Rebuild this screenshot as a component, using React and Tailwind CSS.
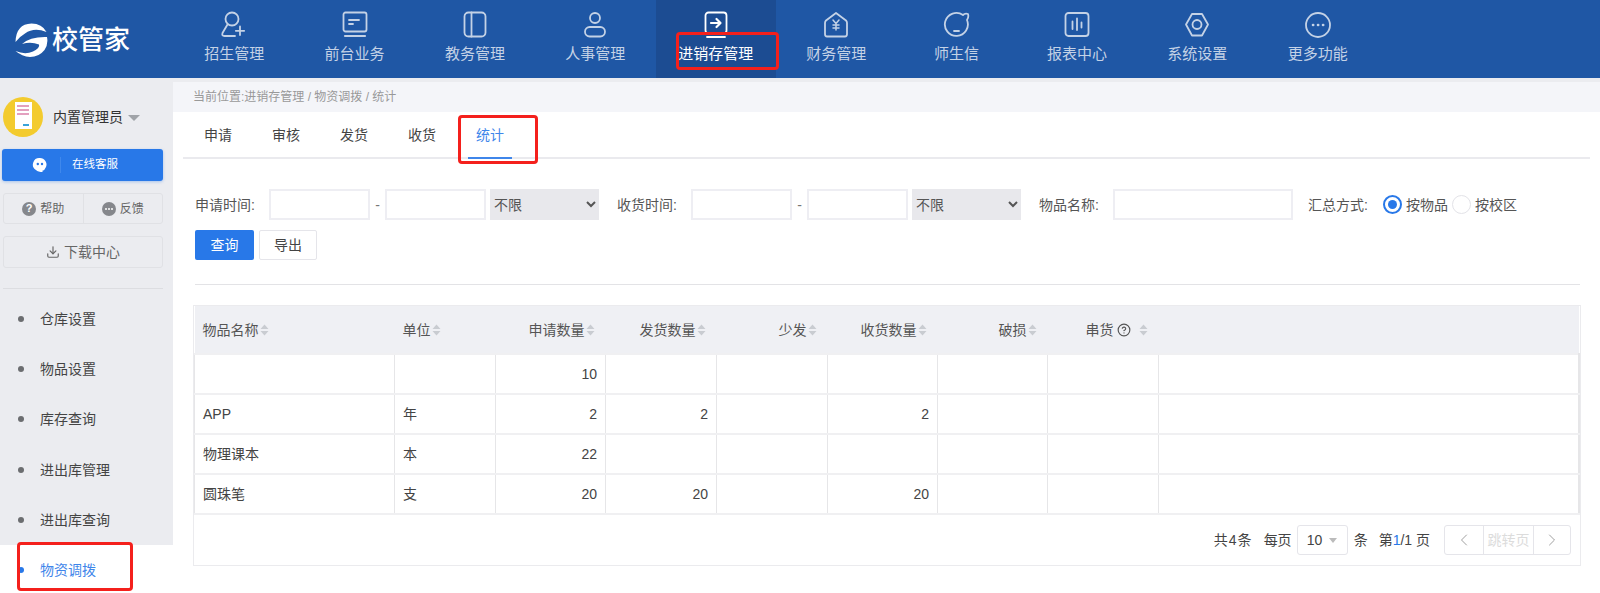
import React from 'react';
import { ChevronLeft, ChevronRight, Download, CircleHelp } from 'lucide-react';

const iconProps = {
  width: 30,
  height: 30,
  viewBox: '0 0 30 30',
  fill: 'none',
  stroke: 'currentColor',
  strokeWidth: 1.8,
  strokeLinecap: 'round',
  strokeLinejoin: 'round',
};

const navItems = [
  {
    label: '招生管理',
    icon: (
      <svg {...iconProps}>
        <circle cx="13" cy="8" r="6.5" />
        <path d="M8.5 13.5 L3.5 22 Q2.5 25 5.5 25 H16" />
        <path d="M21 15.5 V24 M16.8 19.8 H25.2" />
      </svg>
    ),
  },
  {
    label: '前台业务',
    icon: (
      <svg {...iconProps}>
        <rect x="3.5" y="1.5" width="23" height="19" rx="2" />
        <path d="M9 9 H19 M9 13 H13" />
        <path d="M5 25 H25" strokeWidth="2.2" />
      </svg>
    ),
  },
  {
    label: '教务管理',
    icon: (
      <svg {...iconProps}>
        <rect x="4.5" y="1.5" width="21" height="24" rx="4" />
        <path d="M11.5 1.5 V25.5" />
      </svg>
    ),
  },
  {
    label: '人事管理',
    icon: (
      <svg {...iconProps}>
        <circle cx="15" cy="7" r="5" />
        <rect x="5" y="16" width="20" height="9.5" rx="4.7" />
      </svg>
    ),
  },
  {
    label: '进销存管理',
    active: true,
    icon: (
      <svg {...iconProps}>
        <rect x="4.5" y="1.5" width="21" height="21" rx="3" />
        <path d="M10 12 H19 M15.5 8 L19.5 12 L15.5 16" strokeWidth="2.2" />
        <path d="M6 26 H24" />
      </svg>
    ),
  },
  {
    label: '财务管理',
    icon: (
      <svg {...iconProps}>
        <path d="M15 2 L25 9.5 Q26 10.5 26 12 V23 Q26 25.5 24 25.5 H6 Q4 25.5 4 23 V12 Q4 10.5 5 9.5 Z" />
        <path d="M12 9 L15 12.5 L18 9 M15 12.5 V19 M12 14 H18 M12 17 H18" strokeWidth="1.5" />
      </svg>
    ),
  },
  {
    label: '师生信',
    icon: (
      <svg {...iconProps}>
        <path d="M21 4 A11.5 11.5 0 1 0 25 9 Q27 6 26 3 Q23 2 21 4 Z" />
        <path d="M12 20 H17" />
      </svg>
    ),
  },
  {
    label: '报表中心',
    icon: (
      <svg {...iconProps}>
        <rect x="3.5" y="2" width="23" height="23" rx="3" />
        <path d="M10.5 10.5 V18 M15 7.5 V19 M19.5 11.5 V16.5" />
      </svg>
    ),
  },
  {
    label: '系统设置',
    icon: (
      <svg {...iconProps}>
        <path d="M10 3 H20 L26 13.5 L20 24.5 H10 L4 13.5 Z" />
        <circle cx="15" cy="13.5" r="4.5" />
      </svg>
    ),
  },
  {
    label: '更多功能',
    icon: (
      <svg {...iconProps}>
        <circle cx="15" cy="14" r="12" />
        <path d="M10 14 H10.2 M15 14 H15.2 M20 14 H20.2" strokeWidth="2.6" />
      </svg>
    ),
  },
];

const menuItems = ['仓库设置', '物品设置', '库存查询', '进出库管理', '进出库查询', '物资调拨'];
const tabs = ['申请', '审核', '发货', '收货', '统计'];

const rows = [
  ['', '', '10', '', '', '', '', ''],
  ['APP', '年', '2', '2', '', '2', '', ''],
  ['物理课本', '本', '22', '', '', '', '', ''],
  ['圆珠笔', '支', '20', '20', '', '20', '', ''],
];

const SortIcon = () => (
  <svg width="9" height="12" viewBox="0 0 9 12" className="shrink-0 ml-px">
    <path d="M4.5 0.5 L8.5 5 H0.5 Z M4.5 11.5 L0.5 7 H8.5 Z" fill="#c9ccd1" />
  </svg>
);

const RedBox = ({ className }) => (
  <div className={`absolute border-[3px] border-[#f4201c] rounded-[4px] pointer-events-none ${className}`} />
);

const Logo = () => (
  <div className="flex items-center w-[174px] pl-[15px] pt-[2px] shrink-0">
    <svg width="33" height="35" viewBox="0 0 33 35">
      <path d="M0.5 19 Q1 1 16.5 0.5 Q27 0.5 31.5 9 Q19 4 10 10.5 Q4 14 0.5 19 Z" fill="#fff" />
      <path d="M7 21 Q15 13.5 32 14 Q33.5 21 29.5 27 Q24 34 15 34 Q7 33.5 0.5 28 Q10 32 18 28.5 Q25 25 24 21.5 Q16 18.5 7 21 Z" fill="#fff" />
    </svg>
    <span className="ml-[4px] text-[26px] font-medium leading-none text-white">校管家</span>
  </div>
);

const TopNav = () => (
  <header className="h-[78px] bg-[#1f57a5] flex shrink-0">
    <Logo />
    {navItems.map((item) => (
      <div
        key={item.label}
        className={`w-[120.4px] flex flex-col items-center pt-[11px] ${
          item.active ? 'bg-[#1c4c92] text-white' : 'text-[#c4d2e6]'
        }`}
      >
        {item.icon}
        <span className="mt-[2px] text-[15px] leading-[22px] whitespace-nowrap">{item.label}</span>
      </div>
    ))}
  </header>
);

const Sidebar = () => (
  <aside className="w-[173px] shrink-0 bg-[#ebecf0] flex flex-col overflow-hidden">
    <div className="flex items-center h-[67px] shrink-0 pl-[3px] pt-[2px]">
      <div className="w-[40px] h-[40px] rounded-full bg-[#f3cb2e] flex items-center justify-center overflow-hidden">
        <div className="w-[17px] h-[27px] bg-white flex flex-col gap-[2px] pt-[3px] pl-[2px] -mt-[2px]">
          <div className="w-[12px] h-[2px] bg-[#e3a0bf]" />
          <div className="w-[12px] h-[2px] bg-[#e3a0bf]" />
          <div className="w-[12px] h-[2px] bg-[#e3a0bf]" />
          <div className="w-[6px] h-[2px] bg-[#3aa3d8] ml-[6px] mt-[7px]" />
        </div>
      </div>
      <span className="ml-[10px] text-sm text-[#333]">内置管理员</span>
      <div className="ml-[5px] mt-[2px] border-x-[6px] border-x-transparent border-t-[6px] border-t-[#a0a3a8]" />
    </div>

    <div className="mx-[2px] w-[161px] h-[32px] shrink-0 bg-[#2878e8] rounded-[3px] flex items-center text-white shadow-[0_1px_3px_rgba(40,120,232,0.35)]">
      <svg width="16" height="16" viewBox="0 0 16 16" className="ml-[30px]">
        <path d="M8 1 A6.5 6.5 0 0 1 14 10 Q13 13 10 14 L11 15 Q6 15 4 13 A6.5 6.5 0 0 1 8 1 Z" fill="#fff" />
        <circle cx="5.8" cy="7" r="1.2" fill="#2878e8" />
        <circle cx="10" cy="7" r="1.2" fill="#2878e8" />
      </svg>
      <div className="ml-[12px] w-px h-[16px] bg-[#3f88ec]" />
      <span className="ml-[11px] text-[11.5px]">在线客服</span>
    </div>

    <div className="mt-[12px] mx-[3px] w-[160px] h-[31px] shrink-0 border border-[#e0e1e5] rounded-[3px] flex text-xs text-[#666]">
      <div className="flex-1 flex items-center justify-center gap-[4px] border-r border-[#e0e1e5]">
        <span className="w-[14px] h-[14px] rounded-full bg-[#85878c] text-white text-[11px] font-bold flex items-center justify-center">?</span>
        帮助
      </div>
      <div className="flex-1 flex items-center justify-center gap-[4px]">
        <span className="w-[14px] h-[14px] rounded-full bg-[#85878c] flex items-center justify-center gap-px">
          <i className="w-[2px] h-[2px] bg-white rounded-full" />
          <i className="w-[2px] h-[2px] bg-white rounded-full" />
          <i className="w-[2px] h-[2px] bg-white rounded-full" />
        </span>
        反馈
      </div>
    </div>

    <div className="mt-[12px] mx-[3px] w-[160px] h-[32px] shrink-0 border border-[#e0e1e5] rounded-[3px] flex items-center justify-center gap-[4px] text-sm text-[#666]">
      <Download size={14} />
      下载中心
    </div>

    <div className="mt-[20px] mx-[3px] w-[160px] h-px shrink-0 bg-[#dcdde1]" />

    <ul className="mt-[5px] flex flex-col shrink-0">
      {menuItems.map((name, i) => {
        const active = i === menuItems.length - 1;
        return (
          <li
            key={name}
            className={`h-[50.2px] shrink-0 flex items-center pl-[18px] text-sm ${
              active ? 'bg-white text-[#3f86ea]' : 'text-[#444]'
            }`}
          >
            <span className={`w-[6px] h-[6px] rounded-full ${active ? 'bg-[#2878e8]' : 'bg-[#6b6d70]'}`} />
            <span className="ml-[16px]">{name}</span>
          </li>
        );
      })}
    </ul>
  </aside>
);

const DateRange = ({ label, className }) => (
  <div className={`flex items-center ${className}`}>
    <span className="text-sm text-[#555] w-[74px] whitespace-nowrap">{label}:</span>
    <input className="w-[101px] h-[31px] bg-white border-2 border-[#eeeef3]" />
    <span className="w-[15px] text-center text-[#777] text-sm">-</span>
    <input className="w-[101px] h-[31px] bg-white border-2 border-[#eeeef3]" />
    <select className="ml-[4px] w-[109px] h-[31px] bg-[#e8e8ec] text-sm text-[#555]">
      <option>不限</option>
    </select>
  </div>
);

const Filters = () => (
  <div className="pl-[22px] pt-[30px]">
    <div className="flex items-center h-[31px]">
      <DateRange label="申请时间" />
      <DateRange label="收货时间" className="ml-[18px]" />
      <span className="ml-[18px] w-[74px] text-sm text-[#555] whitespace-nowrap">物品名称:</span>
      <input className="w-[180px] h-[31px] bg-white border-2 border-[#eeeef3]" />
      <span className="ml-[15px] w-[75px] text-sm text-[#555] whitespace-nowrap">汇总方式:</span>
      <span className="w-[19px] h-[19px] rounded-full border-2 border-[#2878e8] flex items-center justify-center">
        <span className="w-[9px] h-[9px] rounded-full bg-[#2878e8]" />
      </span>
      <span className="ml-[4px] text-sm text-[#555]">按物品</span>
      <span className="ml-[4px] w-[19px] h-[19px] rounded-full border border-[#e3e3e8]" />
      <span className="ml-[4px] text-sm text-[#555]">按校区</span>
    </div>
    <div className="flex gap-[5px] mt-[10px]">
      <button className="w-[59px] h-[30px] bg-[#2878e8] rounded-[2px] text-white text-sm">查询</button>
      <button className="w-[58px] h-[30px] bg-white border border-[#e5e5ea] rounded-[2px] text-[#444] text-sm">导出</button>
    </div>
    <div className="mt-[24px] h-px bg-[#e3e3e6] mr-[20px]" />
  </div>
);

const headers = [
  { label: '物品名称', left: true },
  { label: '单位', left: true },
  { label: '申请数量' },
  { label: '发货数量' },
  { label: '少发' },
  { label: '收货数量' },
  { label: '破损' },
  { label: '串货', help: true },
];

const DataTable = () => (
  <div className="ml-[20px] mt-[20px] w-[1388px] border border-[#ebebee]">
    <table className="w-full table-fixed border-collapse text-sm text-[#444]">
      <colgroup>
        <col className="w-[200px]" />
        <col className="w-[101px]" />
        <col className="w-[110px]" />
        <col className="w-[111px]" />
        <col className="w-[111px]" />
        <col className="w-[110px]" />
        <col className="w-[110px]" />
        <col className="w-[111px]" />
        <col />
      </colgroup>
      <thead>
        <tr className="h-[48px] bg-[#eff0f4]">
          {headers.map((h) => (
            <th key={h.label} className={`font-normal text-[#555] ${h.left ? 'pl-[8px]' : 'pr-[11px]'}`}>
              <div className={`flex items-center ${h.left ? 'justify-start' : 'justify-end'}`}>
                {h.label}
                {h.help && <CircleHelp size={14} className="ml-[3px] mr-[7px]" />}
                <SortIcon />
              </div>
            </th>
          ))}
          <th />
        </tr>
      </thead>
      <tbody>
        {rows.map((row, r) => (
          <tr key={r} className="h-[40px]">
            {row.map((cell, c) => (
              <td
                key={c}
                className={`border-y-2 border-y-[#f0f0f2] border-x border-x-[#e6e6e8] px-[8px] ${c < 2 ? 'text-left' : 'text-right'}`}
              >
                {cell}
              </td>
            ))}
            <td className="border-y-2 border-y-[#f0f0f2] border-l border-l-[#e6e6e8] border-r-2 border-r-[#e6e6e8]" />
          </tr>
        ))}
      </tbody>
    </table>
    <div className="h-[50px] flex items-center justify-end pr-[9px] text-sm text-[#444]">
      <span className="tracking-[1px]">共4条</span>
      <span className="ml-[11px]">每页</span>
      <div className="ml-[5px] w-[51px] h-[30px] border border-[#e5e5ea] rounded-[3px] flex items-center pl-[9px]">
        10
        <span className="ml-[7px] mt-[1px] border-x-[4px] border-x-transparent border-t-[5px] border-t-[#bbb]" />
      </div>
      <span className="ml-[6px]">条</span>
      <span className="ml-[11px]">
        第<span className="text-[#2878e8]">1</span>/1 页
      </span>
      <div className="ml-[14px] w-[127px] h-[30px] border border-[#e5e5ea] rounded-[3px] flex items-center">
        <div className="w-[38px] flex justify-center text-[#a0a0a0]">
          <ChevronLeft size={20} strokeWidth={1.2} />
        </div>
        <div className="w-[51px] h-full border-x border-[#e5e5ea] flex items-center justify-center text-[#dcdcdc]">跳转页</div>
        <div className="flex-1 flex justify-center text-[#a0a0a0]">
          <ChevronRight size={20} strokeWidth={1.2} />
        </div>
      </div>
    </div>
  </div>
);

const App = () => (
  <div className="relative w-[1600px] h-[593px] overflow-hidden bg-white flex flex-col [font-family:'Liberation_Sans','Noto_Sans_CJK_SC',sans-serif]">
    <TopNav />
    <div className="h-[4px] bg-[#ebecf0] shrink-0" />
    <div className="flex flex-1 min-h-0">
      <Sidebar />
      <main className="flex-1 min-w-0">
        <div className="h-[30px] bg-[#f4f5f9] flex items-center pl-[20px] text-xs text-[#999]">
          当前位置:进销存管理 / 物资调拨 / 统计
        </div>
        <div className="ml-[10px] mr-[10px] h-[47px] border-b-2 border-[#eaeaee] flex pl-[1px]">
          {tabs.map((t) => (
            <div
              key={t}
              className={`relative w-[68px] flex items-center justify-center text-sm ${
                t === '统计' ? 'text-[#3f86ea]' : 'text-[#444]'
              }`}
            >
              {t}
              {t === '统计' && <span className="absolute left-[12px] right-[12px] bottom-[-2px] h-[2px] bg-[#3f86ea]" />}
            </div>
          ))}
        </div>
        <Filters />
        <DataTable />
      </main>
    </div>
    <RedBox className="left-[676px] top-[32px] w-[103px] h-[38px]" />
    <RedBox className="left-[458px] top-[115px] w-[80px] h-[49px]" />
    <RedBox className="left-[17px] top-[542px] w-[116px] h-[49px]" />
  </div>
);

export default App;
